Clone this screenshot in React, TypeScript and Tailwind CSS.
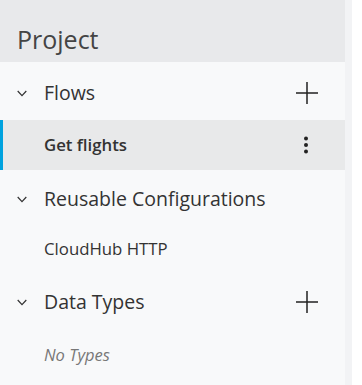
import { ReactNode } from "react";

function Chevron() {
  return (
    <svg width="10" height="7" viewBox="0 0 10 7" className="shrink-0">
      <path d="M0.7 1l4.3 4.6L9.3 1" fill="none" stroke="#333" strokeWidth="1.2" />
    </svg>
  );
}

function Plus() {
  return (
    <svg width="22" height="22" viewBox="0 0 22 22">
      <path d="M11 0v22M0 11h22" stroke="#222" strokeWidth="1.5" />
    </svg>
  );
}

function Dots() {
  return (
    <svg width="6" height="18" viewBox="0 0 6 18">
      <circle cx="3" cy="2.5" r="2" fill="#222" />
      <circle cx="3" cy="9" r="2" fill="#222" />
      <circle cx="3" cy="15.5" r="2" fill="#222" />
    </svg>
  );
}

function Section({ title, action }: { title: string; action?: ReactNode }) {
  return (
    <div className="flex items-center h-[54px] pl-[17px] pr-[27px]">
      <Chevron />
      <span className="ml-[17px] text-[19.5px] text-[#333] flex-1">{title}</span>
      {action}
    </div>
  );
}

export default function App() {
  return (
    <div
      className="flex w-[362px] h-[385px] bg-white"
      style={{ fontFamily: '"Open Sans", sans-serif' }}
    >
      <div className="w-[345px] flex flex-col bg-[#f8f9fa]">
        {/* Header */}
        <div className="h-[62px] bg-[#e8e9eb] flex items-end pl-[17px] pb-[10px]">
          <h1 className="text-[25px] text-[#444] leading-none">Project</h1>
        </div>

        <div className="h-[4px]" />
        <Section title="Flows" action={<Plus />} />

        <div className="h-[50px] bg-[#e8e9ea] border-l-[3px] border-[#00a2df] flex items-center pl-[41px] pr-[36px]">
          <span className="flex-1 text-[16.8px] font-semibold text-[#333]">Get flights</span>
          <Dots />
        </div>

        <div className="h-[2px]" />
        <Section title="Reusable Configurations" />
        <div className="h-[46px] flex items-center pl-[44px] text-[16.8px] text-[#333]">
          CloudHub HTTP
        </div>

        <div className="h-[3px]" />
        <Section title="Data Types" action={<Plus />} />
        <div className="h-[52px] flex items-center pl-[44px] text-[16.5px] italic text-[#777]">
          No Types
        </div>
      </div>
      <div className="w-[7px] bg-[#f2f3f5]" />
    </div>
  );
}
